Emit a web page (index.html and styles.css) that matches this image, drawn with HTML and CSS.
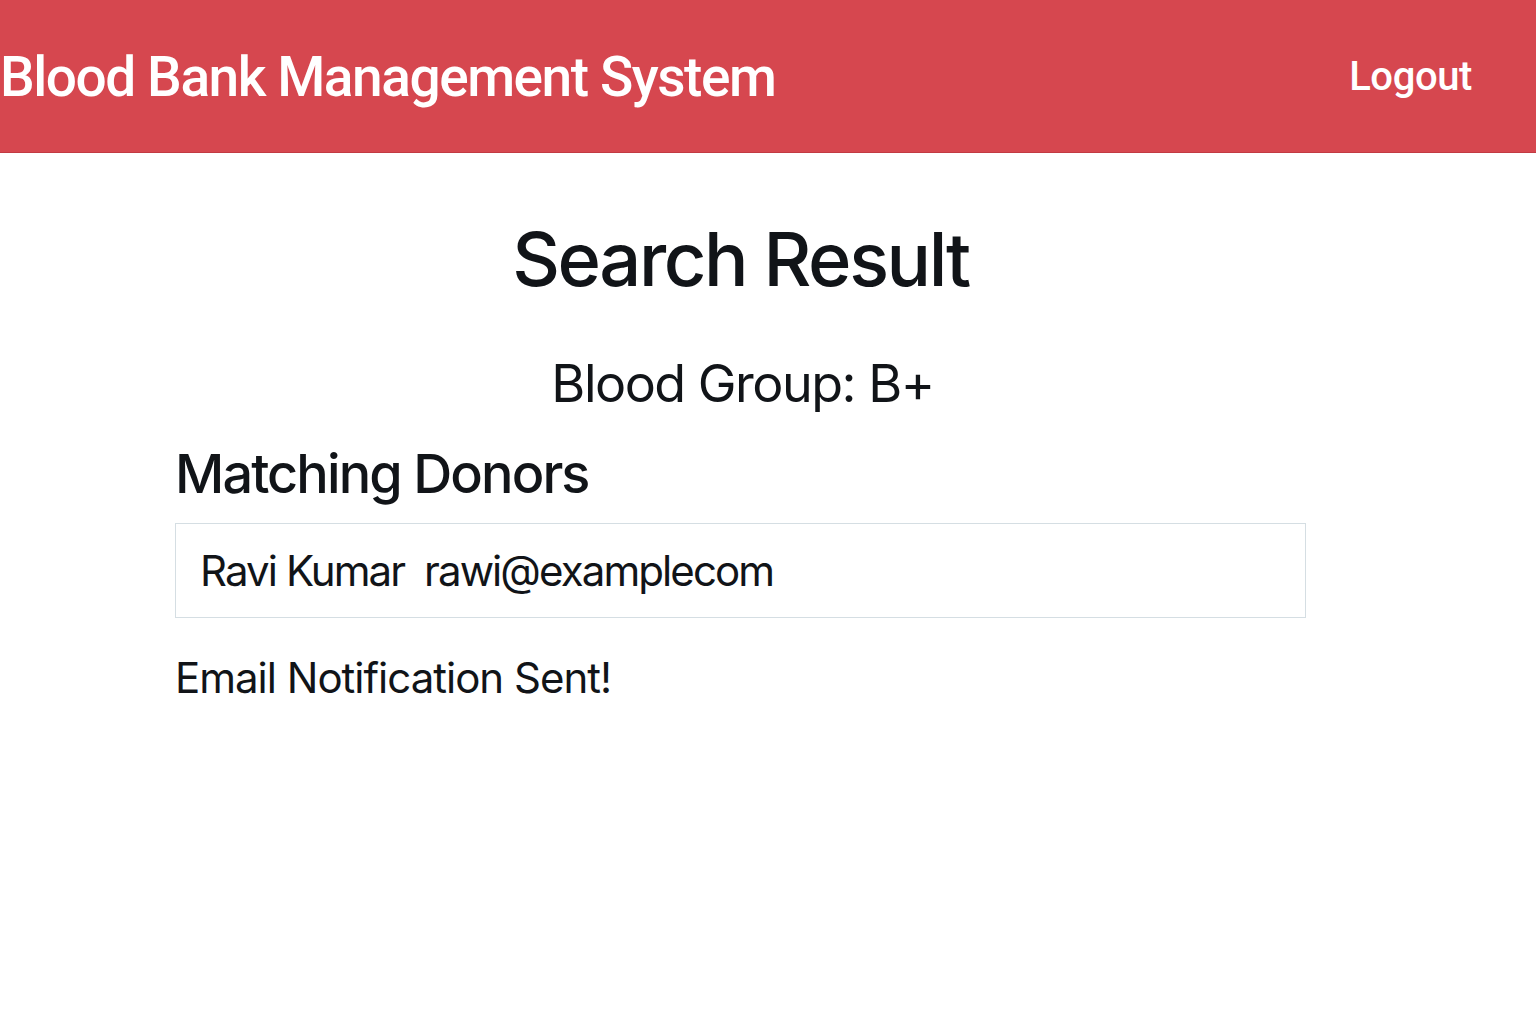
FILE: index.html
```html
<!DOCTYPE html>
<html lang="en">
<head>
<meta charset="utf-8">
<title>Blood Bank Management System</title>
<link rel="stylesheet" href="styles.css">
</head>
<body>
<header class="topbar">
  <div class="brand">Blood Bank Management System</div>
  <a class="logout" href="#">Logout</a>
</header>
<main class="content">
  <h1 class="title">Search Result</h1>
  <h2 class="group">Blood Group: B+</h2>
  <section class="donors">
    <h3 class="donors-title">Matching Donors</h3>
    <div class="donor-card">Ravi Kumar&nbsp; rawi@examplecom</div>
    <p class="notice">Email Notification Sent!</p>
  </section>
</main>
</body>
</html>
```
FILE: styles.css
```css
html, body {
  margin: 0;
  padding: 0;
  background: #ffffff;
  font-family: Inter, "Noto Sans", sans-serif;
  color: #111418;
}
.topbar {
  height: 152px;
  background: #d6474f;
  border-bottom: 1px solid #c23a42;
  display: flex;
  align-items: center;
  justify-content: space-between;
  padding: 0 64px 0 0;
}
.brand {
  color: #fff;
  font-family: Roboto, "Liberation Sans", sans-serif;
  font-size: 55px;
  font-weight: 500;
  letter-spacing: -1.45px;
  margin-top: 2px;
}
.logout {
  color: #fff;
  font-family: Roboto, "Liberation Sans", sans-serif;
  font-size: 40px;
  font-weight: 500;
  letter-spacing: -0.4px;
  text-decoration: none;
  margin-top: 0;
}
.content {
  display: flex;
  flex-direction: column;
  align-items: center;
  padding: 0 230px 0 175px;
}
.title {
  margin: 62px 0 0;
  font-size: 74px;
  font-weight: 500;
  line-height: 1.2;
  letter-spacing: -2.4px;
}
.group {
  margin: 49px 0 0 4px;
  font-size: 52px;
  font-weight: 400;
  line-height: 1.2;
  letter-spacing: -1.5px;
}
.donors {
  align-self: stretch;
}
.donors-title {
  margin: 27px 0 0;
  font-size: 54px;
  font-weight: 500;
  line-height: 1.2;
  letter-spacing: -1.9px;
}
.donor-card {
  margin-top: 16px;
  border: 1.5px solid #d5dee3;
  padding: 0 24px;
  height: 93px;
  display: flex;
  align-items: center;
  font-size: 42px;
  letter-spacing: -1.9px;
}
.notice {
  margin: 35px 0 0;
  font-size: 42px;
  letter-spacing: -1px;
  line-height: 1.2;
}
```
